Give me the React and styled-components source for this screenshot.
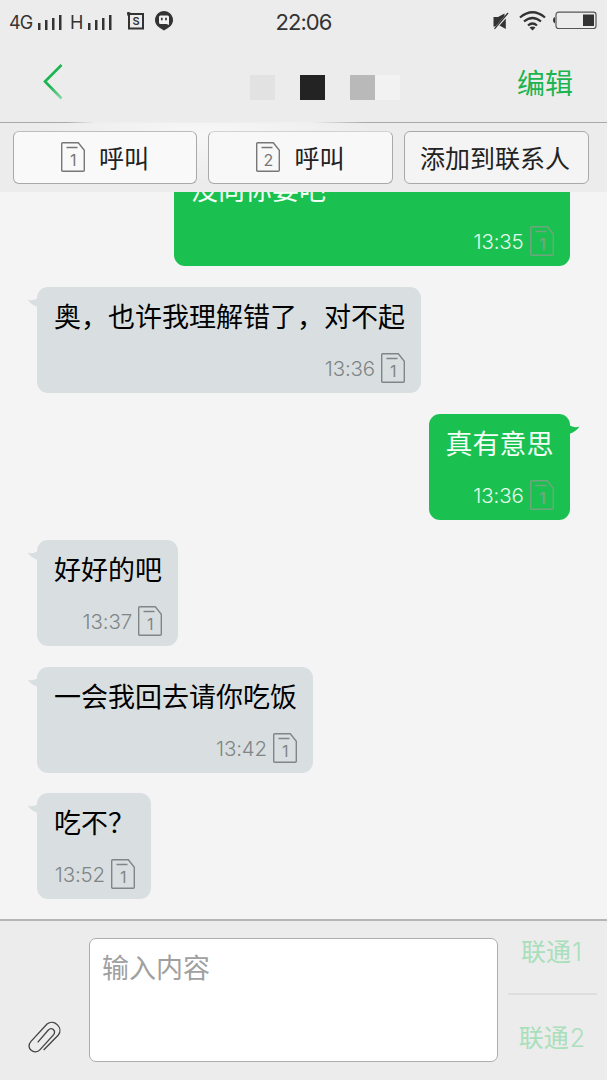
import React from "react";
import styled, { createGlobalStyle } from "styled-components";

const latin = `Inter, "Noto Sans CJK SC", sans-serif`;
const cjk = `"Noto Sans CJK SC", sans-serif`;

const GlobalStyle = createGlobalStyle`
  * { box-sizing: border-box; }
  body { margin: 0; background: #f4f4f4; }
  svg { display: block; flex: none; overflow: visible; }
`;

const Screen = styled.div`
  width: 607px;
  height: 1080px;
  display: flex;
  flex-direction: column;
  overflow: hidden;
  background: #f4f4f4;
  font-family: ${cjk};
`;

const StatusBar = styled.div`
  height: 42px;
  flex: none;
  display: grid;
  grid-template-columns: 1fr auto 1fr;
  align-items: center;
  padding: 0 9px;
  background: #ececec;
  color: #333;
  font-family: ${latin};
`;

const StatusGroup = styled.div`
  display: flex;
  align-items: center;
  justify-content: ${(p) => (p.$end ? "flex-end" : "flex-start")};
`;

const Network = styled.span`
  width: ${(p) => p.$width}px;
  margin: 0 ${(p) => p.$gap}px 0 ${(p) => p.$before || 0}px;
  padding-top: 3px;
  font-size: 18px;
  line-height: 20px;
  letter-spacing: -0.8px;
`;

const SignalBars = styled.svg`
  margin-top: 2px;
`;

const StatusIcon = styled.svg`
  margin-left: ${(p) => p.$before || 0}px;
  margin-right: ${(p) => p.$after || 0}px;
`;

const Clock = styled.span`
  padding-top: 1px;
  font-size: 22px;
  line-height: 26px;
  letter-spacing: -0.9px;
`;

const TitleBar = styled.header`
  height: 80px;
  flex: none;
  display: flex;
  align-items: center;
  justify-content: space-between;
  padding: 0 34px 0 43px;
  background: #ececec;
`;

const Masked = styled.div`
  display: flex;
  margin: 10px 0 0 71px;
`;

const Pixel = styled.span`
  width: 25px;
  height: 25px;
  background: ${(p) => p.$tone};
`;

const EditButton = styled.button`
  padding: 0;
  border: 0;
  background: none;
  color: #1bb450;
  font: 28px/36px ${cjk};
`;

const ActionBar = styled.nav`
  height: 70px;
  flex: none;
  display: grid;
  grid-template-columns: 184px 185px 185px;
  column-gap: 11px;
  padding: 9px 0 8px 13px;
  background:
    linear-gradient(90deg, #a9a9a9 0, #a9a9a9 66px, #efefef 95px, #f0f0f0 310px, #a9a9a9 365px) top / 100% 1px no-repeat,
    radial-gradient(ellipse 170px 46px at 205px 12px, #f7f7f7, #f3f3f300),
    #ececec;
`;

const ActionButton = styled.button`
  display: flex;
  align-items: center;
  justify-content: center;
  gap: 14px;
  height: 53px;
  padding: 0 ${(p) => (p.$label ? 3 : 0)}px 1px 0;
  border: 1px solid #a9a9a9;
  border-top-color: ${(p) => p.$topEdge || "#a9a9a9"};
  border-radius: 6px;
  background: ${(p) => p.$fill || "#f4f4f4"};
  color: #222;
  font: 25px/32px ${cjk};
  white-space: nowrap;
`;

const Thread = styled.main`
  flex: 1;
  min-height: 0;
  display: flex;
  flex-direction: column;
  justify-content: flex-end;
  gap: 20.6px;
  padding: 0 37px 19.6px;
  overflow: hidden;
`;

const Bubble = styled.article`
  position: relative;
  flex: none;
  align-self: ${(p) => (p.$sent ? "flex-end" : "flex-start")};
  width: ${(p) => (p.$width ? `${p.$width}px` : "auto")};
  height: 106px;
  padding: 9px 16.4px 0 17px;
  border-radius: 11px;
  background: ${(p) => (p.$sent ? "#1bc150" : "#d9dfe1")};
  color: ${(p) => (p.$sent ? "#f3fff6" : "#000")};
`;

const Tail = styled.svg`
  position: absolute;
  top: 11px;
  ${(p) => (p.$sent ? "right: -10px; transform: scaleX(-1);" : "left: -10px;")}
`;

const Words = styled.p`
  margin: 0;
  font-size: 27px;
  line-height: 40px;
  white-space: nowrap;
`;

const Meta = styled.div`
  display: flex;
  align-items: center;
  justify-content: flex-end;
  gap: 6px;
  height: 30px;
  margin-top: 17px;
  color: ${(p) => (p.$sent ? "#e6faec" : "#808586")};
`;

const Time = styled.time`
  padding-top: 2px;
  font: 300 20.5px/24px ${latin};
  letter-spacing: -0.15px;
`;

const Composer = styled.footer`
  height: 161px;
  flex: none;
  display: flex;
  border-top: 2px solid #b5b5b5;
  background: #ececec;
`;

const Attach = styled.div`
  width: 89px;
  padding: 99px 0 0 27px;
`;

const Field = styled.div`
  width: 409px;
  height: 124px;
  margin-top: 17px;
  padding: 8px 12px;
  border: 1px solid #adadad;
  border-radius: 7px;
  background: #fff;
  color: #a0a0a0;
  font-size: 27px;
  line-height: 40px;
`;

const Carriers = styled.div`
  width: 89px;
  margin-left: 10px;
  display: flex;
  flex-direction: column;
`;

const Carrier = styled.button`
  height: ${(p) => p.$height}px;
  padding: 0 ${(p) => p.$inset}px ${(p) => p.$lift}px 0;
  border: 0;
  border-bottom: ${(p) => (p.$ruled ? "2px solid #dedede" : "0")};
  background: none;
  color: #a9dfbb;
  font: 25px/32px ${cjk};
`;

const CarrierSlot = styled.span`
  margin-left: 1px;
  font-family: ${latin};
  font-weight: 300;
`;

const Signal = () => (
  <SignalBars width="24" height="15" fill="#333">
    <rect x="0" y="8" width="2.5" height="7" />
    <rect x="7" y="5" width="2.5" height="10" />
    <rect x="14" y="3" width="2.5" height="12" />
    <rect x="21" y="0" width="2.5" height="15" />
  </SignalBars>
);

const Sim = ({ slot, color, bold }) => (
  <svg width="24" height="30" fill="none" stroke={color} strokeWidth="1.4">
    <path d="M1.7.8h15.6l6 7.4v20q0 1-1 1H1.700q-1 0-1-1v-26.400q0-1 1-1ZM5.500 5.500h11" />
    <text x="12.3" y="23.5" fill={color} stroke="none" textAnchor="middle" fontFamily="Inter, sans-serif" fontSize="16" fontWeight={bold ? 600 : 400}>{slot}</text>
  </svg>
);

const messages = [
  { text: "没向你要吧", time: "13:35", sent: true, width: 396 },
  { text: "奥，也许我理解错了，对不起", time: "13:36" },
  { text: "真有意思", time: "13:36", sent: true },
  { text: "好好的吧", time: "13:37" },
  { text: "一会我回去请你吃饭", time: "13:42" },
  { text: "吃不？", time: "13:52" },
];

const Message = ({ text, time, sent, width }) => (
  <Bubble $sent={sent} $width={width}>
    <Tail $sent={sent} width="11" height="10">
      <path d="M.5 1.500Q6 3.200 11 .3V9Q4 6.800 .5 1.500Z" fill={sent ? "#1bc150" : "#d9dfe1"} />
    </Tail>
    <Words>{text}</Words>
    <Meta $sent={sent}>
      <Time>{time}</Time>
      <Sim slot="1" color={sent ? "#6fa57f" : "#808586"} bold={sent} />
    </Meta>
  </Bubble>
);

export default function App() {
  return (
    <Screen>
      <GlobalStyle />
      <StatusBar>
        <StatusGroup>
          <Network $width={23} $gap={6}>4G</Network>
          <Signal />
          <Network $width={13} $gap={5} $before={8}>H</Network>
          <Signal />
          <StatusIcon $before={15} width="18" height="18" fill="none" stroke="#333" strokeWidth="2">
            <path d="M2 2H16V16.500H2ZM0 1.500H3.500M1.500 0V4" />
            <text x="9" y="13.4" fill="#333" stroke="none" textAnchor="middle" fontFamily="Inter, sans-serif" fontSize="11" fontWeight="600">S</text>
          </StatusIcon>
          <StatusIcon $before={9} width="20" height="20">
            <path d="M10 0a9.300 9 0 0 1 4 17l-4 2.500L6 17A9.300 9 0 0 1 10 0Z" fill="#333" />
            <path d="M6.500 4.500h7q1.500 0 1.500 1.500v8l-2.500-1h-6Q5 13 5 11.500V6q0-1.500 1.500-1.500Z" fill="#f2f2f2" />
            <path d="M7.800 6.800v2.500M12 6.800v2.500" stroke="#333" strokeWidth="1.7" />
          </StatusIcon>
        </StatusGroup>
        <Clock>22:06</Clock>
        <StatusGroup $end>
          <svg width="16" height="18" fill="#333">
            <path d="M.5 5H5L11.500 1.500V4L2.500 14.500H.5ZM12.800 6.500V17L6.500 13.500Z" />
            <path d="M1.500 16.800 15 1" stroke="#333" strokeWidth="1.3" />
          </svg>
          <StatusIcon $before={10} width="27" height="20" fill="none" stroke="#333" strokeWidth="2.2">
            <path d="M1 6.500Q13.500-4 26 6.500M5 10.500Q13.500 3.500 22 10.500M9 14.500Q13.500 10.500 18 14.500" />
            <path d="M10.500 16.500Q13.500 14.500 16.500 16.500L13.500 19.500Z" fill="#333" stroke="none" />
          </StatusIcon>
          <StatusIcon $before={7} $after={1} width="44" height="18">
            <rect x="3" y=".2" width="40" height="16.3" rx="2.5" fill="none" stroke="#555" strokeWidth="1.2" />
            <path d="M2 5v6.500q-2-.5-2-3.200T2 5Z" fill="#333" />
            <rect x="30" y="2.5" width="11" height="11.5" fill="#333" />
          </StatusIcon>
        </StatusGroup>
      </StatusBar>
      <TitleBar>
        <svg width="20" height="36" fill="none">
          <defs>
            <linearGradient id="backFade" x1="0" y1="0" x2="0" y2="1">
              <stop offset=".65" stopColor="#1bb450" />
              <stop offset="1" stopColor="#8fd5a8" />
            </linearGradient>
          </defs>
          <path d="M18.500 1 2 17.500 18.500 34.500" stroke="url(#backFade)" strokeWidth="2.6" />
        </svg>
        <Masked>
          {["#e2e2e2", "#ececec", "#232323", "#ececec", "#b9b9b9", "#f2f2f2"].map((tone, i) => (
            <Pixel key={i} $tone={tone} />
          ))}
        </Masked>
        <EditButton>编辑</EditButton>
      </TitleBar>
      <ActionBar>
        <ActionButton $fill="#f9f9f9" $topEdge="#bdbdbd">
          <Sim slot="1" color="#777" />呼叫
        </ActionButton>
        <ActionButton $fill="#f8f8f8" $topEdge="#d2d2d2">
          <Sim slot="2" color="#777" />呼叫
        </ActionButton>
        <ActionButton $label>添加到联系人</ActionButton>
      </ActionBar>
      <Thread>
        {messages.map((m) => (
          <Message key={m.time + m.text} {...m} />
        ))}
      </Thread>
      <Composer>
        <Attach>
          <svg width="36" height="35" viewBox="0 0 108 105" fill="none" stroke="#444" strokeWidth="4">
            <path d="M50 90 94 45C110 25 82-5 60 12L12 64C-6 84 22 108 40 88L80 44C88 32 74 20 64 30L32 67" />
          </svg>
        </Attach>
        <Field>输入内容</Field>
        <Carriers>
          <Carrier $height={74} $lift={12} $inset={2} $ruled>联通<CarrierSlot>1</CarrierSlot></Carrier>
          <Carrier $height={85} $lift={1} $inset={1}>联通<CarrierSlot>2</CarrierSlot></Carrier>
        </Carriers>
      </Composer>
    </Screen>
  );
}
